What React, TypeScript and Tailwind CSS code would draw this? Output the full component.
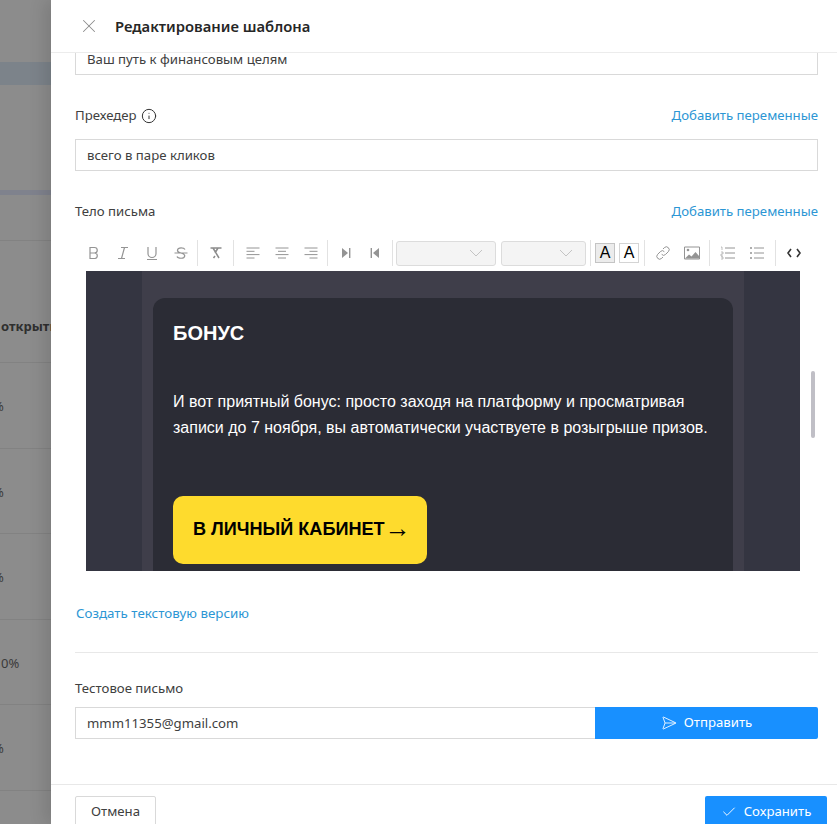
import { Check, Info, SendHorizontal, X } from "lucide-react";
import React from "react";

const rowValues = ["%", "%", "%", "0%", "%"];

const Sep = ({ ml = "ml-0" }: { ml?: string }) => (
  <div className={`w-px h-[26px] bg-[#e2e2e2] shrink-0 ${ml}`}></div>
);

const Tool = ({ children }: { children: React.ReactNode }) => (
  <div className="w-[29px] h-[26px] flex items-center justify-center text-[#949494] shrink-0">
    {children}
  </div>
);

const Glyph = ({ children }: { children: React.ReactNode }) => (
  <svg width="16" height="16" viewBox="0 0 16 16" fill="none" stroke="currentColor" strokeWidth="1.2">
    {children}
  </svg>
);

const Select = ({ w }: { w: string }) => (
  <div className={`${w} h-[25px] border border-[#dcdcdc] rounded-[3px] bg-[#f4f4f4] flex items-center justify-end pr-3 shrink-0`}>
    <svg width="14" height="8" viewBox="0 0 14 8" fill="none" stroke="#c4c4c4" strokeWidth="1">
      <path d="M1 1l6 6 6-6" />
    </svg>
  </div>
);

const Toolbar = () => (
  <div className="flex items-center h-[26px] ml-[4px] mt-[1px]">
    <Tool>
      <Glyph>
        <path d="M4 2.5h4.500a2.600 2.600 0 010 5.500H4zM4 8h5a2.800 2.800 0 010 5.500H4z" />
      </Glyph>
    </Tool>
    <Tool>
      <Glyph>
        <path d="M6 2.5h7M3 13.5h7M9.5 2.5l-3 11" />
      </Glyph>
    </Tool>
    <Tool>
      <Glyph>
        <path d="M4 2v6.5a4 4 0 008 0V2M3 14.5h10" />
      </Glyph>
    </Tool>
    <Tool>
      <Glyph>
        <path d="M12 4.500C11 2.500 5 2 4.500 5c-.3 2 2 2.700 3.500 3 2 .5 4 1.200 3.700 3.200C11.300 14 5 13.800 4 11.500M1.500 8h13" />
      </Glyph>
    </Tool>
    <Sep ml="ml-[2px]" />
    <div className="w-[35px] h-[26px] flex items-center justify-center text-[#8c8c8c] shrink-0">
      <Glyph>
        <path d="M2.5 3h11M5 3l6 10M10 3L7 8M5.5 13l1.500-2" strokeWidth="1.5" />
      </Glyph>
    </div>
    <Sep />
    <div className="ml-[4px] flex">
      <Tool>
        <Glyph>
          <path d="M1.5 3h13M1.5 6.300h8M1.500 9.600h13M1.500 13h8" strokeWidth="1" />
        </Glyph>
      </Tool>
      <Tool>
        <Glyph>
          <path d="M1.5 3h13M4 6.300h8M1.500 9.600h13M4 13h8" strokeWidth="1" />
        </Glyph>
      </Tool>
      <Tool>
        <Glyph>
          <path d="M1.5 3h13M6.500 6.300h8M1.500 9.600h13M6.500 13h8" strokeWidth="1" />
        </Glyph>
      </Tool>
    </div>
    <Sep ml="ml-[2px]" />
    <div className="ml-[3px] flex">
      <Tool>
        <svg width="16" height="16" viewBox="0 0 16 16" fill="currentColor">
          <path d="M4 3l6 5-6 5z" />
          <rect x="11" y="3" width="1.4" height="10" />
        </svg>
      </Tool>
      <Tool>
        <svg width="16" height="16" viewBox="0 0 16 16" fill="currentColor">
          <path d="M12 3L6 8l6 5z" />
          <rect x="3.6" y="3" width="1.4" height="10" />
        </svg>
      </Tool>
    </div>
    <Sep ml="ml-[3px]" />
    <div className="ml-[3px]">
      <Select w="w-[100px]" />
    </div>
    <div className="ml-[5px]">
      <Select w="w-[85px]" />
    </div>
    <Sep ml="ml-[4px]" />
    <div className="ml-[4px] w-[20px] h-[20px] border border-[#c4c4c4] bg-[#ececec] flex items-center justify-center text-[16px] leading-none text-black font-['Liberation_Sans',sans-serif] shrink-0">
      A
    </div>
    <div className="ml-[4px] w-[20px] h-[20px] border border-[#d4d4d4] bg-white flex items-center justify-center text-[16px] leading-none text-black font-['Liberation_Sans',sans-serif] shrink-0">
      A
    </div>
    <Sep ml="ml-[5px]" />
    <div className="ml-[3px]">
      <Tool>
        <svg width="16" height="16" viewBox="0 0 24 24" fill="none" stroke="currentColor" strokeWidth="1.5">
          <path d="M10 14a4 4 0 006 0l4-4a4 4 0 00-6-6l-2 2" />
          <path d="M14 10a4 4 0 00-6 0l-4 4a4 4 0 006 6l2-2" />
        </svg>
      </Tool>
    </div>
    <Tool>
      <svg width="16" height="14" viewBox="0 0 16 14" fill="currentColor">
        <path d="M.5 1h15v12H.5z" fill="none" stroke="currentColor" strokeWidth="1" />
        <circle cx="4" cy="4" r="1.3" />
        <path d="M1 12.5l4-4 2.500 2 4-4.500 3.500 4v2.500z" />
      </svg>
    </Tool>
    <Sep ml="ml-[3px]" />
    <div className="ml-[3px]">
      <Tool>
        <svg width="16" height="14" viewBox="0 0 16 14" fill="none" stroke="currentColor" strokeWidth="1">
          <path d="M5 2h10M5 7h10M5 12h10" />
          <path d="M1 1h1v3M1 6h2v2H1v2h2M1 11h2v2H1" strokeWidth=".6" />
        </svg>
      </Tool>
    </div>
    <Tool>
      <svg width="16" height="14" viewBox="0 0 16 14" fill="none" stroke="currentColor" strokeWidth="1">
        <path d="M5 2h10M5 7h10M5 12h10" />
        <path d="M1 2h2M1 7h2M1 12h2" strokeWidth="1.5" />
      </svg>
    </Tool>
    <Sep ml="ml-[4px]" />
    <div className="ml-[3px] w-[29px] h-[26px] flex items-center justify-center text-[#333] shrink-0">
      <svg width="14" height="10" viewBox="0 0 14 10" fill="none" stroke="currentColor" strokeWidth="1.6">
        <path d="M4 1L1 5l3 4M10 1l3 4-3 4" />
      </svg>
    </div>
  </div>
);

const EmailPreview = () => (
  <div className="ml-[35px] mt-[5px] w-[714px] h-[300px] overflow-hidden bg-[#343541] px-[56px] font-['Liberation_Sans',sans-serif]">
    <div className="w-[602px] h-full bg-[#3f3e4a] pt-[27px] px-[11px]">
      <div className="w-[580px] h-[400px] bg-[#2b2c35] rounded-t-[12px] px-[20px] pt-[21px] text-white">
        <div className="text-[20px] leading-[28px] font-bold">БОНУС</div>
        <div className="mt-[42px] text-[16px] leading-[26px]">
          И вот приятный бонус: просто заходя на платформу и просматривая записи до 7 ноября, вы автоматически участвуете в розыгрыше призов.
        </div>
        <div className="mt-[55px] w-[254px] h-[68px] rounded-[10px] bg-[#fedb2d] flex items-center pl-[20px] text-black text-[18.1px] font-bold whitespace-nowrap">
          В ЛИЧНЫЙ КАБИНЕТ
          <span className="-mt-[3px] font-normal font-['Liberation_Serif',serif] text-[26px] leading-none">→</span>
        </div>
      </div>
    </div>
  </div>
);

export default function App() {
  return (
    <div className="relative flex w-[837px] h-[824px] overflow-hidden bg-white font-['Noto_Sans',sans-serif] text-[13.2px] text-[#404040]">
      <div className="w-[51px] h-full shrink-0 bg-[#8c8c8c] overflow-hidden text-[#2f2f2f]">
        <div className="h-[62px]"></div>
        <div className="h-[23px] bg-[#7c838a]"></div>
        <div className="h-[105px]"></div>
        <div className="h-[5px] bg-[#7f828d]"></div>
        <div className="h-[46px] border-b border-[#828282]"></div>
        <div className="h-[122px] border-b border-[#828282] flex items-center whitespace-nowrap overflow-hidden font-bold text-[13px] pt-[50px]">
          <span className="ml-[1px]">открыты</span>
        </div>
        {rowValues.map((value, index) => (
          <div
            key={index}
            className="h-[85.6px] border-b border-[#828282] flex items-center pt-[3px] text-[13px] text-[#3a3a3a]"
          >
            <span className={index === 3 ? "ml-[1px]" : "-ml-[7px]"}>{value}</span>
          </div>
        ))}
      </div>

      <div className="relative flex-1 flex flex-col bg-white shadow-[-6px_0_16px_rgba(0,0,0,0.12)]">
        <div className="relative z-10 h-[53px] shrink-0 bg-white border-b border-[#ececec] flex items-center pl-[27px]">
          <X className="w-[22px] h-[22px] text-[#8c8c8c]" strokeWidth={1.1} />
          <div className="ml-[15px] text-[14.8px] font-semibold text-[#262626]">Редактирование шаблона</div>
        </div>

        <div className="flex-1 min-h-0 overflow-hidden -mt-[10px]">
          <div className="pl-[24px] pr-[19px]">
            <div className="h-[32px] border border-[#d9d9d9] flex items-center px-[11px] pt-[1px]">Ваш путь к финансовым целям</div>
            <div className="mt-[29px] flex justify-between items-center h-[22px] pt-[2px]">
              <div className="flex items-center gap-[4px]">
                Прехедер
                <Info className="w-[16px] h-[16px] text-[#333]" strokeWidth={1.5} />
              </div>
              <span className="text-[#2c96d4]">Добавить переменные</span>
            </div>
            <div className="mt-[13px] h-[32px] border border-[#d9d9d9] flex items-center px-[11px] pt-[1px]">всего в паре кликов</div>
            <div className="mt-[29px] flex justify-between items-center h-[22px] pt-[2px]">
              <span>Тело письма</span>
              <span className="text-[#2c96d4]">Добавить переменные</span>
            </div>
          </div>
          <div className="pl-[24px] mt-[18px]">
            <Toolbar />
          </div>
          <EmailPreview />
          <div className="pl-[25px] mt-[32px] h-[20px] flex items-center text-[13.35px] text-[#2c96d4]">Создать текстовую версию</div>
          <div className="ml-[24px] mr-[19px] mt-[29px] border-t border-[#e8e8e8]"></div>
          <div className="pl-[24px] mt-[26px] h-[20px] flex items-center">Тестовое письмо</div>
          <div className="ml-[24px] mr-[19px] mt-[8px] flex h-[32px]">
            <div className="flex-1 border border-[#d9d9d9] border-r-0 flex items-center px-[11px] pt-[1px]">mmm11355@gmail.com</div>
            <div className="w-[223px] bg-[#1890ff] rounded-r-[2px] flex items-center justify-center gap-[7px] text-white">
              <SendHorizontal className="w-[16px] h-[16px]" strokeWidth={1.3} />
              Отправить
            </div>
          </div>
        </div>

        <div className="h-[40px] shrink-0 border-t border-[#e8e8e8] flex justify-between pl-[24px] pr-[10px] pt-[11px]">
          <div className="w-[81px] h-[32px] border border-[#d9d9d9] rounded-[2px] flex items-center justify-center">Отмена</div>
          <div className="w-[122px] h-[32px] bg-[#1890ff] rounded-[2px] flex items-center justify-center gap-[7px] text-white">
            <Check className="w-[16px] h-[16px]" strokeWidth={1.4} />
            Сохранить
          </div>
        </div>

        <div className="absolute left-[760px] top-[371px] w-[4px] h-[67px] rounded-full bg-[#c0bfc6]"></div>
      </div>
    </div>
  );
}
